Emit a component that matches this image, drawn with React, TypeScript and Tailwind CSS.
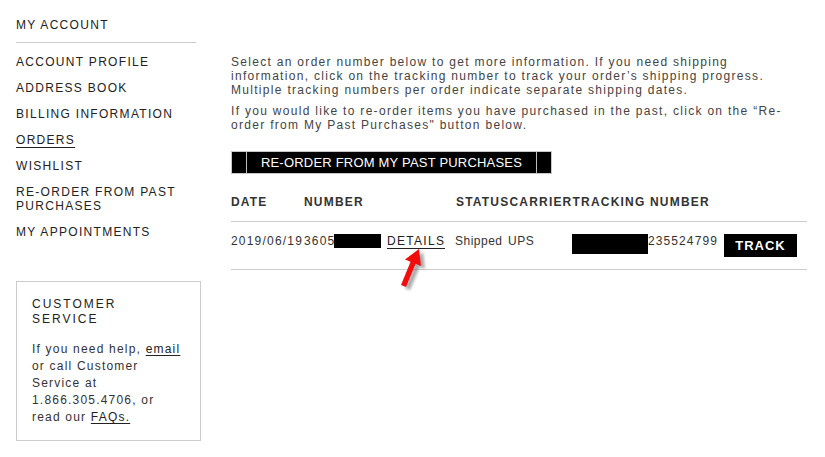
import React from 'react'

const nav = ['ACCOUNT PROFILE', 'ADDRESS BOOK', 'BILLING INFORMATION', 'ORDERS', 'WISHLIST', 'RE-ORDER FROM PAST PURCHASES', 'MY APPOINTMENTS']

export default function App() {
  return (
    <div className="flex min-h-screen bg-white pl-4 pt-[18px] text-[#222]" style={{ fontFamily: '"Liberation Sans", Arial, sans-serif' }}>
      {/* sidebar */}
      <aside className="flex w-[185px] shrink-0 flex-col">
        <h2 className="text-[12px] leading-[14px] tracking-[1.3px]">MY ACCOUNT</h2>
        <div className="mt-[10px] h-px w-[180px] bg-[#cccccc]" />
        <ul className="mt-[12px] flex w-[170px] flex-col gap-[12px]">
          {nav.map((n) => (
            <li key={n} className="text-[12px] leading-[14px] tracking-[1.3px]">
              <span className={n === 'ORDERS' ? 'underline decoration-[#222] underline-offset-[3px]' : ''}>{n}</span>
            </li>
          ))}
        </ul>
        <div className="mt-[42px] h-[160px] w-[185px] border border-[#cccccc] px-[15px] pt-[15px]">
          <h3 className="text-[12px] leading-[15px] tracking-[2px]">CUSTOMER SERVICE</h3>
          <p className="mt-[14px] text-[12px] leading-[17px] tracking-[1.2px] text-[#333]">
            If you need help, <a className="text-[#222] underline underline-offset-[2px]">email</a> or call Customer Service at 1.866.305.4706, or read our{' '}
            <a className="text-[#222] underline underline-offset-[2px]">FAQs.</a>
          </p>
        </div>
      </aside>

      {/* main */}
      <main className="ml-[30px] mt-[37px] w-[576px]">
        <p className="text-[12px] leading-[14px] tracking-[1.3px] text-[#444]">
          Select an order number below to get more information. If you need shipping information, click on the tracking number to track your order’s shipping progress. Multiple tracking numbers per order indicate separate shipping dates.
        </p>
        <p className="mt-[7px] text-[12px] leading-[14px] tracking-[1.3px] text-[#444]">
          If you would like to re-order items you have purchased in the past, click on the “Re-order from My Past Purchases" button below.
        </p>

        <button className="mt-[19px] flex h-[23px] w-[321px] items-stretch border border-[#c8c8c8] bg-black">
          <span className="w-[14px]" />
          <span className="flex flex-1 items-center justify-center border-x border-[#bdbdbd] text-[13px] tracking-[0.2px] text-white">RE-ORDER FROM MY PAST PURCHASES</span>
          <span className="w-[14px]" />
        </button>

        <div className="mt-[21px] flex border-b border-[#cccccc] pb-[12px] text-[12px] font-bold leading-[14px] tracking-[1.2px] text-[#333]">
          <div className="w-[73px]">DATE</div>
          <div className="w-[152px]">NUMBER</div>
          <div>STATUS</div>
          <div>CARRIER</div>
          <div>TRACKING NUMBER</div>
        </div>

        <div className="relative flex items-start border-b border-[#cccccc] pb-[12px] pt-[12px] text-[12px] leading-[14px] tracking-[1.2px] text-[#333]">
          <div className="w-[73px]">2019/06/19</div>
          <div className="flex w-[151px] items-start">
            <span className="w-[30px]">3605</span>
            <span className="h-[14px] w-[47px] bg-black" />
            <span className="ml-[6px] border-b border-[#222] tracking-[1.3px] text-[#222]">DETAILS</span>
          </div>
          <div className="w-[53px] tracking-[0.5px]">Shipped</div>
          <div className="w-[64px] tracking-[0.6px]">UPS</div>
          <div className="flex w-[152px] items-start">
            <span className="h-[20px] w-[76px] bg-black" />
            <span className="tracking-[1.1px]">235524799</span>
          </div>
          <button className="flex h-[23px] w-[73px] items-center justify-center bg-black text-[13px] font-bold tracking-[1px] text-white">TRACK</button>

          {/* red arrow */}
          <svg className="absolute left-[167px] top-[26px]" width="34" height="46" viewBox="0 0 34 46">
            <defs>
              <filter id="sh" x="-50%" y="-50%" width="200%" height="200%">
                <feGaussianBlur stdDeviation="1.5" />
              </filter>
            </defs>
            <polygon
              points="21,1 23,18 17.6,15.8 8,39 3,37 12.6,13.8 7,11.5"
              fill="#555"
              opacity="0.5"
              filter="url(#sh)"
              transform="translate(4,3)"
            />
            <polygon points="21,1 23,18 17.6,15.8 8,39 3,37 12.6,13.8 7,11.5" fill="#f20d0d" />
          </svg>
        </div>
      </main>
    </div>
  )
}
